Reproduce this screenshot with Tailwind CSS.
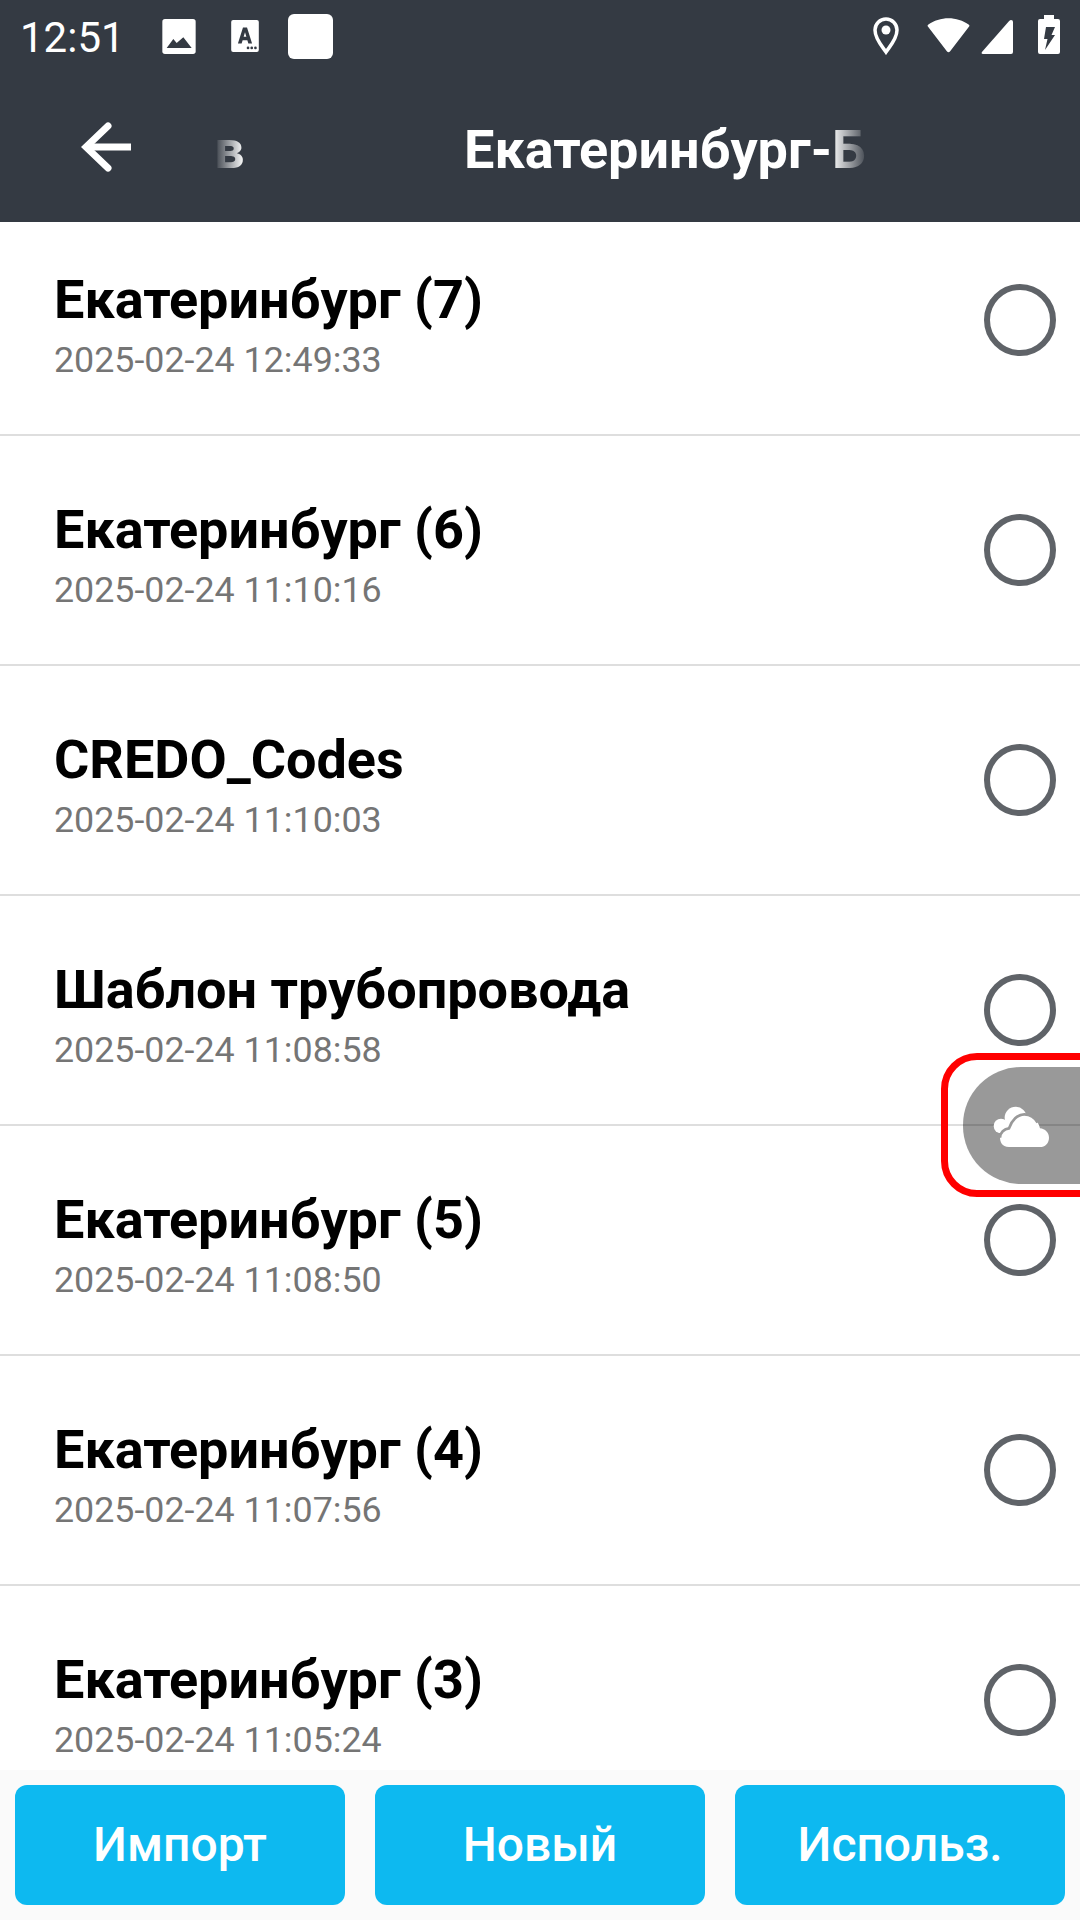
<!DOCTYPE html>
<html lang="ru">
<head>
    <meta charset="UTF-8">
    <meta name="viewport" content="width=device-width, initial-scale=1.0">
    <title>Екатеринбург-Б</title>
    <script src="https://cdn.jsdelivr.net/npm/@tailwindcss/browser@4"></script>
</head>
<body class="bg-white font-['Roboto',sans-serif]">
<div class="relative w-[1080px] h-[1920px] overflow-hidden flex flex-col bg-white">

    <!-- status bar + toolbar -->
    <div class="h-[222px] shrink-0 bg-[#343a43] text-white flex flex-col">
        <div class="h-[72px] flex items-center pl-[20px] pr-[20px]">
            <span class="text-[42px] leading-none w-[142px] mt-[4px]">12:51</span>
            <svg class="w-[34px] h-[35px]" viewBox="0 0 100 105">
                <rect width="100" height="105" rx="8" fill="#fff"/>
                <path d="M13 87 L33 60 L43 72 L63 55 L88 87Z" fill="#343a43"/>
            </svg>
            <svg class="w-[28px] h-[32px] ml-[35px]" viewBox="0 0 82 95">
                <rect width="82" height="95" rx="6" fill="#fff"/>
                <path d="M20 70 L35 22 H47 L62 70 H51 L48 60 H34 L31 70Z M37 50 H45 L41 36Z" fill="#343a43" fill-rule="evenodd"/>
                <circle cx="50" cy="83" r="4" fill="#343a43"/><circle cx="61" cy="83" r="4" fill="#343a43"/><circle cx="72" cy="83" r="4" fill="#343a43"/>
            </svg>
            <div class="w-[45px] h-[45px] ml-[29px] rounded-[6px] bg-white"></div>
            <div class="flex-1"></div>
            <svg class="w-[26px] h-[38px]" viewBox="0 0 26 38">
                <path d="M13 35 C9 29 2 22 2 13 A11 11 0 0 1 24 13 C24 22 17 29 13 35Z" fill="none" stroke="#fff" stroke-width="3.500"/>
                <circle cx="13" cy="13" r="4.500" fill="#fff"/>
            </svg>
            <svg class="w-[45px] h-[36px] ml-[27px] mb-[2px]" viewBox="0 0 44 37">
                <path d="M1 8 C13 -1 31 -1 43 8 Q44 9 43 10 L23.500 35.500 Q22 37 20.500 35.500 L1 10 Q0 9 1 8Z" fill="#fff"/>
            </svg>
            <svg class="w-[34px] h-[34px] ml-[9px] mt-[2px]" viewBox="0 0 33 35">
                <path d="M31 0 Q33 0 33 2 L33 33 Q33 35 31 35 L2 35 Q0 35 1 33 L29 1 Q30 0 31 0Z" fill="#fff"/>
            </svg>
            <svg class="w-[22px] h-[39px] ml-[24px] mb-[3px]" viewBox="0 0 22 39">
                <path d="M6 0 H16 V4 H20 Q22 4 22 6 V37 Q22 39 20 39 H2 Q0 39 0 37 V6 Q0 4 2 4 H6Z" fill="#fff"/>
                <path d="M8 12 H17 L13.500 20 H17 L7 35 L9.500 24 H6Z" fill="#343a43"/>
            </svg>
        </div>
        <div class="flex-1 flex items-center">
            <svg class="w-[50px] h-[50px] ml-[81px]" viewBox="0 0 50 50">
                <path d="M50 25 H6" fill="none" stroke="#fff" stroke-width="7"/>
                <path d="M27 4 L5 25 L27 46" fill="none" stroke="#fff" stroke-width="7" stroke-linecap="round"/>
            </svg>
            <div class="relative w-[80px] ml-[83px] mt-[6px] text-[54px] font-bold text-white leading-none">в
                <div class="absolute inset-y-0 left-0 w-[30px] bg-gradient-to-r from-[#343a43] to-transparent"></div>
            </div>
            <div class="relative ml-[170px] mt-[6px] text-[54px] font-bold leading-none w-[405px] whitespace-nowrap">Екатеринбург-Б
                <div class="absolute inset-y-0 right-0 w-[38px] bg-gradient-to-r from-transparent to-[#343a43]"></div>
            </div>
        </div>
    </div>

    <!-- list -->
    <div class="flex-1 min-h-0 overflow-hidden">
        <div class="-mt-[16px]">
            <div class="h-[230px] border-b-2 border-[#dedede] flex items-center pl-[54px] pr-[24px]">
                <div class="flex-1 pt-[4px]">
                    <div class="text-[54px] leading-[76px] font-bold text-black">Екатеринбург (7)</div>
                    <div class="text-[35.800px] leading-[44px] text-[#757575]">2025-02-24 12:49:33</div>
                </div>
                <div class="w-[72px] h-[72px] rounded-full border-[6px] border-[#5f6368]"></div>
            </div>
            <div class="h-[230px] border-b-2 border-[#dedede] flex items-center pl-[54px] pr-[24px]">
                <div class="flex-1 pt-[4px]">
                    <div class="text-[54px] leading-[76px] font-bold text-black">Екатеринбург (6)</div>
                    <div class="text-[35.800px] leading-[44px] text-[#757575]">2025-02-24 11:10:16</div>
                </div>
                <div class="w-[72px] h-[72px] rounded-full border-[6px] border-[#5f6368]"></div>
            </div>
            <div class="h-[230px] border-b-2 border-[#dedede] flex items-center pl-[54px] pr-[24px]">
                <div class="flex-1 pt-[4px]">
                    <div class="text-[54px] leading-[76px] font-bold text-black">CREDO_Codes</div>
                    <div class="text-[35.800px] leading-[44px] text-[#757575]">2025-02-24 11:10:03</div>
                </div>
                <div class="w-[72px] h-[72px] rounded-full border-[6px] border-[#5f6368]"></div>
            </div>
            <div class="h-[230px] border-b-2 border-[#dedede] flex items-center pl-[54px] pr-[24px]">
                <div class="flex-1 pt-[4px]">
                    <div class="text-[54px] leading-[76px] font-bold text-black">Шаблон трубопровода</div>
                    <div class="text-[35.800px] leading-[44px] text-[#757575]">2025-02-24 11:08:58</div>
                </div>
                <div class="w-[72px] h-[72px] rounded-full border-[6px] border-[#5f6368]"></div>
            </div>
            <div class="h-[230px] border-b-2 border-[#dedede] flex items-center pl-[54px] pr-[24px]">
                <div class="flex-1 pt-[4px]">
                    <div class="text-[54px] leading-[76px] font-bold text-black">Екатеринбург (5)</div>
                    <div class="text-[35.800px] leading-[44px] text-[#757575]">2025-02-24 11:08:50</div>
                </div>
                <div class="w-[72px] h-[72px] rounded-full border-[6px] border-[#5f6368]"></div>
            </div>
            <div class="h-[230px] border-b-2 border-[#dedede] flex items-center pl-[54px] pr-[24px]">
                <div class="flex-1 pt-[4px]">
                    <div class="text-[54px] leading-[76px] font-bold text-black">Екатеринбург (4)</div>
                    <div class="text-[35.800px] leading-[44px] text-[#757575]">2025-02-24 11:07:56</div>
                </div>
                <div class="w-[72px] h-[72px] rounded-full border-[6px] border-[#5f6368]"></div>
            </div>
            <div class="h-[230px] border-b-2 border-[#dedede] flex items-center pl-[54px] pr-[24px]">
                <div class="flex-1 pt-[4px]">
                    <div class="text-[54px] leading-[76px] font-bold text-black">Екатеринбург (3)</div>
                    <div class="text-[35.800px] leading-[44px] text-[#757575]">2025-02-24 11:05:24</div>
                </div>
                <div class="w-[72px] h-[72px] rounded-full border-[6px] border-[#5f6368]"></div>
            </div>
        </div>
    </div>

    <!-- buttons -->
    <div class="h-[150px] shrink-0 bg-[#fafafa] flex gap-[30px] px-[15px] pt-[15px]">
        <div class="w-[330px] h-[120px] rounded-[12px] bg-[#0db9f0] flex items-center justify-center text-white text-[48px] font-medium">Импорт</div>
        <div class="w-[330px] h-[120px] rounded-[12px] bg-[#0db9f0] flex items-center justify-center text-white text-[48px] font-medium">Новый</div>
        <div class="w-[330px] h-[120px] rounded-[12px] bg-[#0db9f0] flex items-center justify-center text-white text-[48px] font-medium">Использ.</div>
    </div>

    <!-- floating cloud tab -->
    <div class="absolute left-[941px] top-[1053px] w-[220px] h-[144px] rounded-[36px] border-[7px] border-[#ff0000]"></div>
    <div class="absolute left-[963px] top-[1067px] w-[200px] h-[117px] rounded-[58px] bg-black/40 flex items-center pl-[22px]">
        <svg class="w-[75px] h-[60px]" viewBox="0 0 225 180">
            <circle cx="92" cy="65" r="33" fill="#fff"/>
            <circle cx="48" cy="90" r="22" fill="#fff"/>
            <path d="M50 112 L70 70 L100 90Z" fill="#fff"/>
            <path d="M72 153 C50 153 45 135 45 125 C45 110 58 98 72 97 C80 72 98 55 118 55 C142 55 160 75 165 97 C180 98 192 110 192 125 C192 142 180 153 165 153 Z" fill="#fff" stroke="#999" stroke-width="0"/>
            <path d="M45 125 C45 110 58 98 72 97 C80 72 98 55 118 55 C135 55 150 65 158 80" fill="none" stroke="#999" stroke-width="8"/>
        </svg>
    </div>
</div>
</body>
</html>
